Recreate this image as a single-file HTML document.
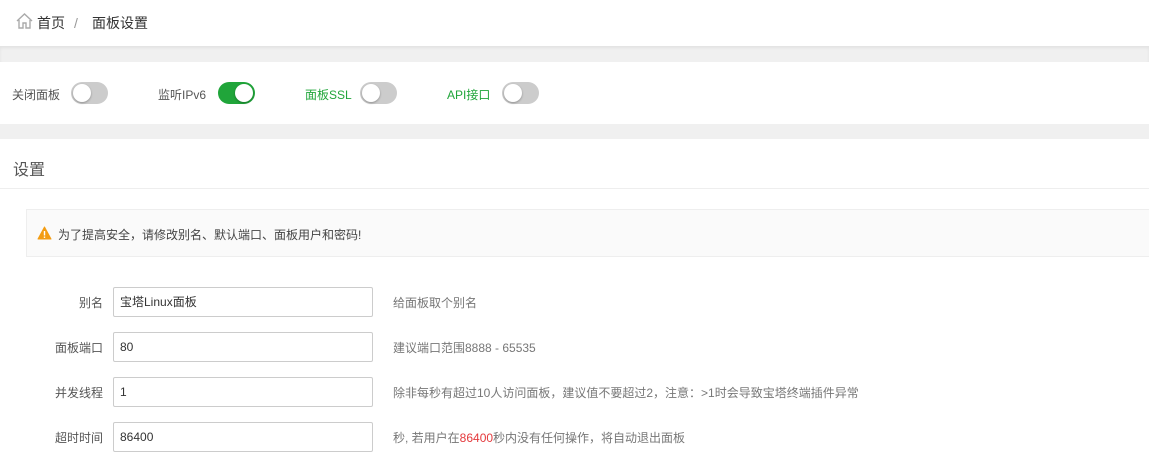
<!DOCTYPE html>
<html><head><meta charset="utf-8"><style>
*{margin:0;padding:0;box-sizing:border-box}
body{width:1149px;height:461px;overflow:hidden;background:#fff;font-family:"Liberation Sans","Noto Sans CJK SC",sans-serif;font-size:12px;color:#555;position:relative}
.abs{position:absolute}
.gray{background:#f0f0f0;left:0;width:1149px}
.tg{position:absolute;top:82px;width:37px;height:22px;border-radius:11px;background:#ccc}
.tg i{position:absolute;top:2px;left:2px;width:18px;height:18px;border-radius:50%;background:#fff;box-shadow:0 1px 2px rgba(0,0,0,.3)}
.tg.on{background:#20a53a}.tg.on i{left:17px}
.lb{position:absolute;top:86px;font-size:12px;color:#555}
.g{color:#20a53a}
.row .l{position:absolute;width:60px;left:43px;text-align:right;font-size:12px;color:#555}
.inp{position:absolute;left:113px;width:260px;height:30px;border:1px solid #ccc;border-radius:2px;padding-left:6px;line-height:28px;font-size:12px;color:#333}
.h{position:absolute;left:393px;font-size:12px;color:#777}
</style></head><body>
<svg class="abs" style="left:15px;top:12px" width="19" height="18" viewBox="0 0 19 18"><path d="M2 9 L9.5 2 L17 9 M4 8 V16 H8 V11 H11 V16 H15 V8" fill="none" stroke="#aaa" stroke-width="1.4"/></svg>
<div class="abs" style="left:37px;top:13px;font-size:14px;color:#333">首页</div>
<div class="abs" style="left:74px;top:15px;font-size:14px;color:#999">/</div>
<div class="abs" style="left:92px;top:13px;font-size:14px;color:#333">面板设置</div>
<div class="abs gray" style="top:46px;height:16px;box-shadow:inset 0 2px 3px rgba(0,0,0,.06)"></div>
<div class="lb" style="left:12px">关闭面板</div><div class="tg" style="left:71px"><i></i></div>
<div class="lb" style="left:158px">监听IPv6</div><div class="tg on" style="left:218px"><i></i></div>
<div class="lb g" style="left:305px">面板SSL</div><div class="tg" style="left:360px"><i></i></div>
<div class="lb g" style="left:447px">API接口</div><div class="tg" style="left:502px"><i></i></div>
<div class="abs gray" style="top:124px;height:15px"></div>
<div class="abs" style="left:13px;top:156px;font-size:16px;color:#555">设置</div>
<div class="abs" style="left:0;top:188px;width:1149px;height:1px;background:#eee"></div>
<div class="abs" style="left:26px;top:209px;width:1130px;height:48px;background:#fafafa;border:1px solid #eee"></div>
<svg class="abs" style="left:37px;top:226px" width="15" height="14" viewBox="0 0 15 14"><path d="M7.5 1 L14 13 H1 Z" fill="#f39c12" stroke="#f39c12" stroke-linejoin="round"/><rect x="6.8" y="5" width="1.4" height="4.5" fill="#fff"/><rect x="6.8" y="10.5" width="1.4" height="1.4" fill="#fff"/></svg>
<div class="abs" style="left:58px;top:226px;font-size:12px;color:#444">为了提高安全，请修改别名、默认端口、面板用户和密码!</div>
<div class="row">
<div class="l" style="top:294px">别名</div><div class="inp" style="top:287px">宝塔Linux面板</div><div class="h" style="top:294px">给面板取个别名</div>
<div class="l" style="top:339px">面板端口</div><div class="inp" style="top:332px">80</div><div class="h" style="top:339px">建议端口范围8888 - 65535</div>
<div class="l" style="top:384px">并发线程</div><div class="inp" style="top:377px">1</div><div class="h" style="top:384px">除非每秒有超过10人访问面板，建议值不要超过2，注意：&gt;1时会导致宝塔终端插件异常</div>
<div class="l" style="top:429px">超时时间</div><div class="inp" style="top:422px">86400</div><div class="h" style="top:429px">秒, 若用户在<span style="color:#e4393c">86400</span>秒内没有任何操作，将自动退出面板</div>
</div>
</body></html>
